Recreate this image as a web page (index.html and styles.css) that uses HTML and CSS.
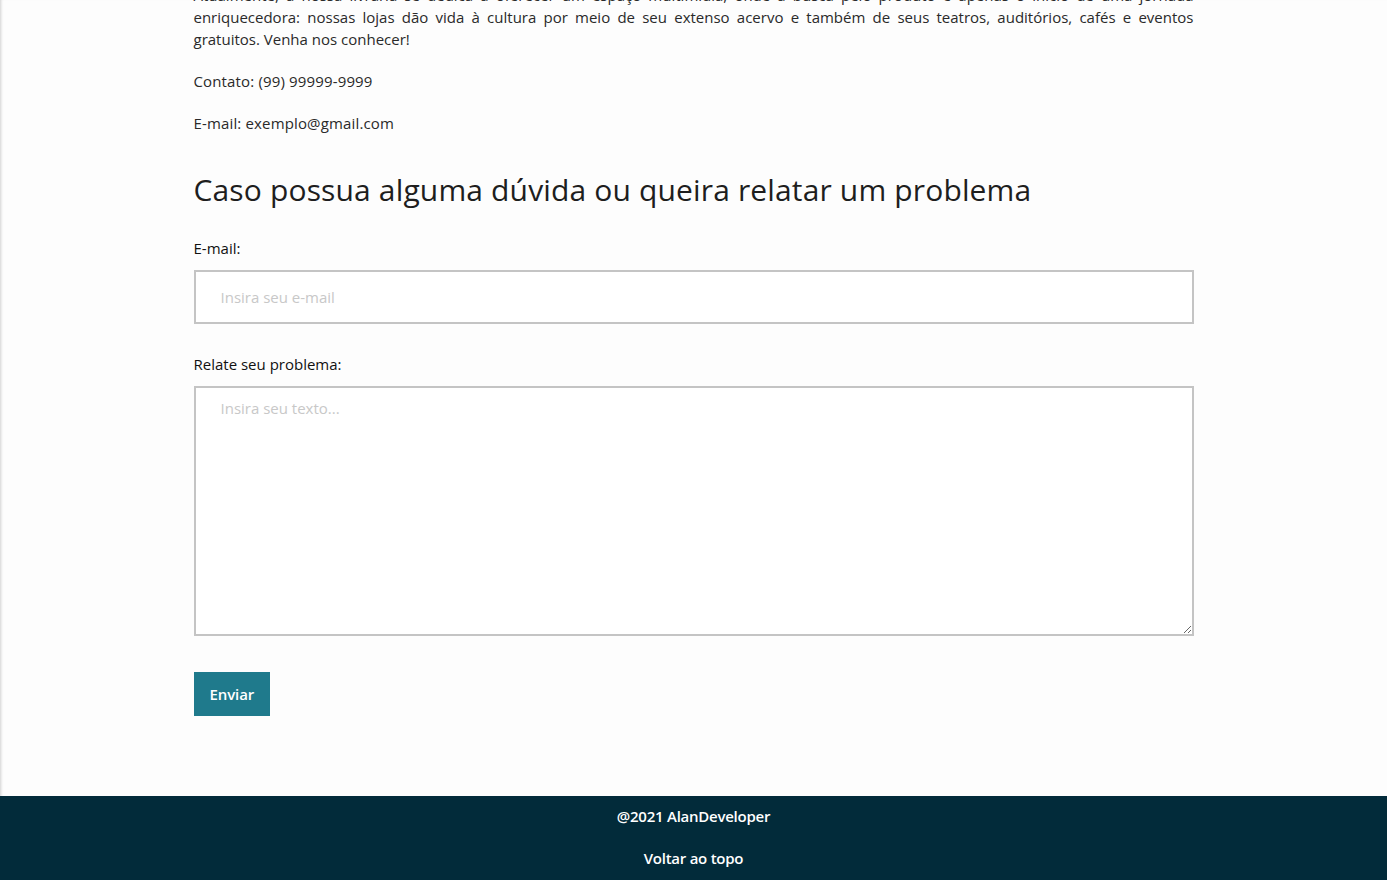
FILE: index.html
```html
<!DOCTYPE html>
<html lang="pt-br">
<head>
<meta charset="utf-8">
<title>Contato</title>
<link rel="stylesheet" href="styles.css">
</head>
<body>
<div class="page">
  <main class="content">
    <p class="about">Atualmente, a nossa livraria se dedica a oferecer um espaço multimídia, onde a busca pelo produto é apenas o início de uma jornada enriquecedora: nossas lojas dão vida à cultura por meio de seu extenso acervo e também de seus teatros, auditórios, cafés e eventos gratuitos. Venha nos conhecer!</p>
    <p class="info">Contato: (99) 99999-9999</p>
    <p class="info">E-mail: exemplo@gmail.com</p>

    <h2 class="title">Caso possua alguma dúvida ou queira relatar um problema</h2>

    <form class="form">
      <label class="label" for="email">E-mail:</label>
      <input class="field" id="email" type="email" placeholder="Insira seu e-mail">
      <label class="label" for="texto">Relate seu problema:</label>
      <textarea class="field area" id="texto" placeholder="Insira seu texto..."></textarea>
      <button class="btn" type="button">Enviar</button>
    </form>
  </main>
  <footer class="footer">
    <p class="foot-line">@2021 AlanDeveloper</p>
    <a class="foot-line foot-link" href="#">Voltar ao topo</a>
  </footer>
</div>
</body>
</html>
```
FILE: styles.css
```css
* { box-sizing: border-box; }
html, body { margin: 0; padding: 0; }
body {
  font-family: "Open Sans", "Noto Sans", sans-serif;
  background: #fdfdfd;
  color: #222;
}
.page {
  box-shadow: inset 3px 0 3px -2px rgba(0,0,0,0.18);
  overflow: hidden;
}
.content {
  width: 1000px;
  margin: -16px auto 0;
  padding-bottom: 80px;
}
.about, .info {
  font-size: 15px;
  line-height: 22px;
  margin: 0 0 20px;
  color: #2a2a2a;
}
.about { text-align: justify; }
.info { letter-spacing: 0.15px; }
.info:last-of-type { margin-bottom: 0; }
.title {
  font-weight: 400;
  font-size: 30px;
  line-height: 36px;
  letter-spacing: 0.15px;
  margin: 38px 0 29px;
  color: #1e1e1e;
}
.form { display: flex; flex-direction: column; align-items: flex-start; }
.label {
  font-size: 15px;
  line-height: 22px;
  color: #111;
  margin-bottom: 11px;
}
.field {
  width: 100%;
  height: 54px;
  border: 2px solid #c4c4c4;
  padding: 0 25px;
  font-family: inherit;
  font-size: 15px;
  background: #fff;
  margin-bottom: 29px;
  outline: none;
}
.field::placeholder { color: #c8c8c8; }
.area {
  height: 250px;
  padding: 10px 25px;
  margin-bottom: 36px;
  resize: vertical;
}
.btn {
  height: 44px;
  padding: 0 16px;
  background: #1f7a8c;
  color: #fff;
  border: none;
  font-family: inherit;
  font-size: 15px;
  font-weight: 600;
  letter-spacing: -0.1px;
  cursor: pointer;
}
.footer {
  background: #022b3a;
  color: #fff;
  display: flex;
  flex-direction: column;
  align-items: center;
  gap: 20px;
  padding: 9px 0 11px;
}
.foot-line {
  margin: 0;
  font-size: 15px;
  line-height: 22px;
  font-weight: 600;
  letter-spacing: -0.25px;
  color: #fff;
  text-decoration: none;
}
```
